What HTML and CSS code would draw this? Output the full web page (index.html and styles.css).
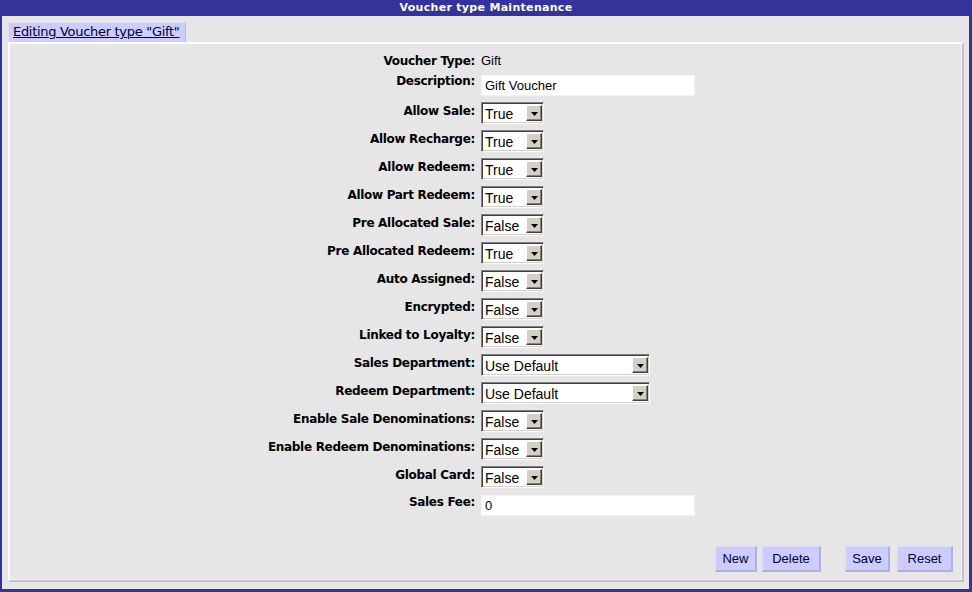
FILE: index.html
```html
<!DOCTYPE html>
<html>
<head>
<meta charset="utf-8">
<title>Voucher type Maintenance</title>
<link rel="stylesheet" href="styles.css">
</head>
<body>
<div class="frame">
  <div class="titlebar">Voucher type Maintenance</div>
  <div class="content">
    <div class="tabs"><a class="tab" href="#">Editing Voucher type "Gift"</a></div>
    <div class="panel">
      <div class="form">
        <div class="lbl lbl-first">Voucher Type:</div>
        <div class="ctl ctl-text">Gift</div>

        <div class="lbl lbl-desc">Description:</div>
        <div class="ctl"><input class="txt" type="text" value="Gift Voucher"></div>

        <div class="lbl">Allow Sale:</div>
        <div class="ctl"><span class="sel"><select><option>True</option><option>False</option></select><span class="arrow"><svg width="7" height="4" viewBox="0 0 7 4"><path d="M0 0H7L3.5 4Z" fill="#000"/></svg></span></span></div>

        <div class="lbl">Allow Recharge:</div>
        <div class="ctl"><span class="sel"><select><option>True</option><option>False</option></select><span class="arrow"><svg width="7" height="4" viewBox="0 0 7 4"><path d="M0 0H7L3.5 4Z" fill="#000"/></svg></span></span></div>

        <div class="lbl">Allow Redeem:</div>
        <div class="ctl"><span class="sel"><select><option>True</option><option>False</option></select><span class="arrow"><svg width="7" height="4" viewBox="0 0 7 4"><path d="M0 0H7L3.5 4Z" fill="#000"/></svg></span></span></div>

        <div class="lbl">Allow Part Redeem:</div>
        <div class="ctl"><span class="sel"><select><option>True</option><option>False</option></select><span class="arrow"><svg width="7" height="4" viewBox="0 0 7 4"><path d="M0 0H7L3.5 4Z" fill="#000"/></svg></span></span></div>

        <div class="lbl">Pre Allocated Sale:</div>
        <div class="ctl"><span class="sel"><select><option>False</option><option>True</option></select><span class="arrow"><svg width="7" height="4" viewBox="0 0 7 4"><path d="M0 0H7L3.5 4Z" fill="#000"/></svg></span></span></div>

        <div class="lbl">Pre Allocated Redeem:</div>
        <div class="ctl"><span class="sel"><select><option>True</option><option>False</option></select><span class="arrow"><svg width="7" height="4" viewBox="0 0 7 4"><path d="M0 0H7L3.5 4Z" fill="#000"/></svg></span></span></div>

        <div class="lbl">Auto Assigned:</div>
        <div class="ctl"><span class="sel"><select><option>False</option><option>True</option></select><span class="arrow"><svg width="7" height="4" viewBox="0 0 7 4"><path d="M0 0H7L3.5 4Z" fill="#000"/></svg></span></span></div>

        <div class="lbl">Encrypted:</div>
        <div class="ctl"><span class="sel"><select><option>False</option><option>True</option></select><span class="arrow"><svg width="7" height="4" viewBox="0 0 7 4"><path d="M0 0H7L3.5 4Z" fill="#000"/></svg></span></span></div>

        <div class="lbl">Linked to Loyalty:</div>
        <div class="ctl"><span class="sel"><select><option>False</option><option>True</option></select><span class="arrow"><svg width="7" height="4" viewBox="0 0 7 4"><path d="M0 0H7L3.5 4Z" fill="#000"/></svg></span></span></div>

        <div class="lbl">Sales Department:</div>
        <div class="ctl"><span class="sel sel-wide"><select><option>Use Default</option></select><span class="arrow"><svg width="7" height="4" viewBox="0 0 7 4"><path d="M0 0H7L3.5 4Z" fill="#000"/></svg></span></span></div>

        <div class="lbl">Redeem Department:</div>
        <div class="ctl"><span class="sel sel-wide"><select><option>Use Default</option></select><span class="arrow"><svg width="7" height="4" viewBox="0 0 7 4"><path d="M0 0H7L3.5 4Z" fill="#000"/></svg></span></span></div>

        <div class="lbl">Enable Sale Denominations:</div>
        <div class="ctl"><span class="sel"><select><option>False</option><option>True</option></select><span class="arrow"><svg width="7" height="4" viewBox="0 0 7 4"><path d="M0 0H7L3.5 4Z" fill="#000"/></svg></span></span></div>

        <div class="lbl">Enable Redeem Denominations:</div>
        <div class="ctl"><span class="sel"><select><option>False</option><option>True</option></select><span class="arrow"><svg width="7" height="4" viewBox="0 0 7 4"><path d="M0 0H7L3.5 4Z" fill="#000"/></svg></span></span></div>

        <div class="lbl">Global Card:</div>
        <div class="ctl"><span class="sel"><select><option>False</option><option>True</option></select><span class="arrow"><svg width="7" height="4" viewBox="0 0 7 4"><path d="M0 0H7L3.5 4Z" fill="#000"/></svg></span></span></div>

        <div class="lbl lbl-fee">Sales Fee:</div>
        <div class="ctl ctl-fee"><input class="txt" type="text" value="0"></div>
      </div>
      <div class="buttons">
        <div class="btn-group">
          <button class="btn btn-new">New</button>
          <button class="btn btn-delete">Delete</button>
        </div>
        <div class="btn-group btn-group-right">
          <button class="btn btn-save">Save</button>
          <button class="btn btn-reset">Reset</button>
        </div>
      </div>
    </div>
  </div>
</div>
</body>
</html>
```

FILE: styles.css
```css
* { box-sizing: border-box; }
html, body { margin: 0; padding: 0; }
body {
  background: #333399;
  width: 972px;
  height: 592px;
  overflow: hidden;
}
.frame {
  width: 972px;
  height: 592px;
  display: flex;
  flex-direction: column;
}
.titlebar {
  height: 16px;
  color: #ffffff;
  font-family: "DejaVu Sans", sans-serif;
  font-weight: bold;
  font-size: 11px;
  letter-spacing: 0.3px;
  line-height: 16px;
  text-align: center;
}
.content {
  margin: 0 3px 3px 2px;
  height: 573px;
  background: #e6e6e6;
  padding: 6px 5px 7px 6px;
  display: flex;
  flex-direction: column;
}
.tabs {
  display: flex;
  height: 20px;
}
.tab {
  display: block;
  width: 178px;
  height: 20px;
  background: #ccccff;
  border-top: 1px solid #e0e0ff;
  border-left: 1px solid #e0e0ff;
  border-right: 1px solid #b8b8e8;
  color: #000033;
  font-family: "DejaVu Sans", sans-serif;
  font-size: 13px;
  letter-spacing: -0.3px;
  line-height: 18px;
  padding-left: 4px;
  text-decoration: underline;
}
.panel {
  flex: 1;
  border-top: 2px solid #ffffff;
  border-left: 2px solid #ffffff;
  border-right: 2px solid #c4c4c4;
  border-bottom: 2px solid #c4c4c4;
  box-shadow: inset -1px -1px 0 #f4f4f4;
  padding-top: 9px;
  display: flex;
  flex-direction: column;
}
.form {
  display: grid;
  grid-template-columns: 465px 1fr;
  column-gap: 6px;
  row-gap: 6px;
  align-items: start;
}
.lbl {
  text-align: right;
  font-family: "DejaVu Sans", sans-serif;
  font-weight: bold;
  font-size: 12px;
  letter-spacing: -0.3px;
  line-height: 15px;
  color: #000000;
  padding-top: 2px;
}
.lbl-first { padding-top: 1px; }
.lbl-desc { padding-top: 0; margin-top: -1px; }
.lbl-fee { padding-top: 1px; }
.ctl {
  display: flex;
  align-items: flex-start;
}
.ctl-fee { padding-top: 1px; }
.ctl-text {
  font-family: "Liberation Sans", Arial, sans-serif;
  font-size: 13px;
  line-height: 16px;
  height: 16px;
}
.txt {
  width: 214px;
  height: 21px;
  margin: 0;
  border: 1px solid #f2f2f2;
  background: #ffffff;
  padding: 0 0 0 3px;
  font-family: "Liberation Sans", Arial, sans-serif;
  font-size: 13px;
  color: #000;
  outline: none;
}
.sel {
  position: relative;
  display: block;
  width: 63px;
  height: 22px;
}
.sel-wide { width: 169px; }
.sel select {
  -webkit-appearance: none;
  appearance: none;
  width: 100%;
  height: 22px;
  margin: 0;
  background: #ffffff;
  border-style: solid;
  border-width: 1px;
  border-color: #808080 #ffffff #ffffff #808080;
  box-shadow: inset 1px 1px 0 #404040, inset -1px -1px 0 #d4d0c8;
  padding: 1px 0 0 3px;
  font-family: "Liberation Sans", Arial, sans-serif;
  font-size: 14px;
  color: #000;
  border-radius: 0;
  outline: none;
}
.arrow {
  position: absolute;
  right: 2px;
  top: 3px;
  width: 16px;
  height: 16px;
  background: #d4d0c8;
  border-style: solid;
  border-width: 1px;
  border-color: #ffffff #404040 #404040 #ffffff;
  box-shadow: inset -1px -1px 0 #808080;
  display: flex;
  align-items: center;
  justify-content: center;
  pointer-events: none;
}
.arrow svg { display: block; margin-top: 1px; }
.buttons {
  margin-top: auto;
  display: flex;
  justify-content: flex-end;
  gap: 24px;
  padding: 0 9px 8px 0;
}
.btn-group {
  display: flex;
  gap: 5px;
}
.btn-group-right { gap: 7px; }
.btn {
  height: 26px;
  margin: 0;
  background: #ccccff;
  border-style: solid;
  border-width: 1px 2px 2px 1px;
  border-color: #dcdcff #b0b0d8 #b0b0d8 #dcdcff;
  font-family: "Liberation Sans", Arial, sans-serif;
  font-size: 13px;
  color: #000033;
  padding: 0;
  border-radius: 0;
}
.btn-new { width: 42px; }
.btn-delete { width: 59px; }
.btn-save { width: 45px; }
.btn-reset { width: 56px; }
```
